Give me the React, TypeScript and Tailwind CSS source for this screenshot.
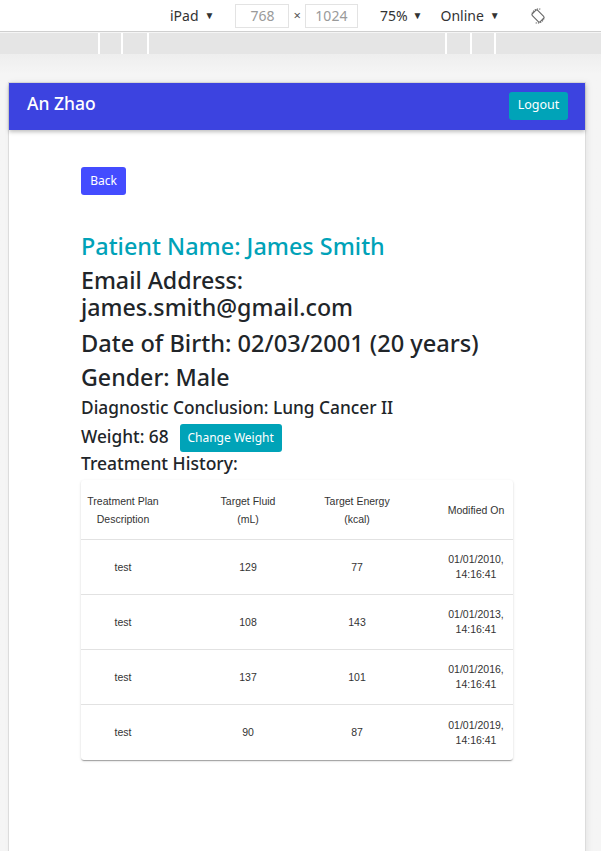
import React from "react";

const rows = [
  { d: "test", f: "129", e: "77", m: "01/01/2010," },
  { d: "test", f: "108", e: "143", m: "01/01/2013," },
  { d: "test", f: "137", e: "101", m: "01/01/2016," },
  { d: "test", f: "90", e: "87", m: "01/01/2019," },
];

function RotateIcon() {
  return (
    <svg width="18" height="18" viewBox="0 0 18 18" fill="none" stroke="#666" strokeWidth="1.1">
      <path d="M3 6.5 A7 7 0 0 1 11.5 2.2" strokeDasharray="1.2 1" />
      <path d="M15 11.5 A7 7 0 0 1 6.5 15.8" strokeDasharray="1.2 1" />
      <rect x="5.2" y="3.4" width="7.6" height="11.2" rx="1.4" transform="rotate(-45 9 9)" />
    </svg>
  );
}

export default function App() {
  const ub = { fontFamily: '"Noto Sans", "Open Sans", sans-serif' };
  return (
    <div className="w-[601px] h-[851px] overflow-hidden bg-[#f5f5f5]" style={{ fontFamily: '"Noto Sans", sans-serif' }}>
      {/* devtools toolbar */}
      <div className="h-[32px] bg-white border-b border-[#cfcfcf] flex items-center text-[14px] text-[#333]">
        <div className="ml-[170px] flex items-center gap-[6px]">
          <span>iPad</span>
          <span className="text-[10px]">▼</span>
        </div>
        <div className="ml-[21px] w-[54px] h-[24px] border border-[#e3e3e3] flex items-center justify-center text-[#9a9a9a]">768</div>
        <span className="mx-[4px] text-[13px] text-[#555]">×</span>
        <div className="w-[53px] h-[24px] border border-[#e3e3e3] flex items-center justify-center text-[#9a9a9a]">1024</div>
        <div className="ml-[22px] flex items-center gap-[5px]">
          <span>75%</span>
          <span className="text-[10px]">▼</span>
        </div>
        <div className="ml-[18px] flex items-center gap-[6px]">
          <span>Online</span>
          <span className="text-[10px]">▼</span>
        </div>
        <div className="ml-[29px] flex items-center">
          <RotateIcon />
        </div>
      </div>
      <div className="mt-[1px] h-[21px] bg-[#e5e5e5] flex">
        <div className="w-[98px]" />
        <div className="w-[2px] bg-white" />
        <div className="w-[21px]" />
        <div className="w-[2px] bg-white" />
        <div className="w-[24px]" />
        <div className="w-[2px] bg-white" />
        <div className="w-[296px]" />
        <div className="w-[2px] bg-white" />
        <div className="w-[23px]" />
        <div className="w-[2px] bg-white" />
        <div className="w-[22px]" />
        <div className="w-[2px] bg-white" />
      </div>
      {/* viewport area */}
      <div className="bg-gradient-to-b from-[#eeeeee] to-[#f5f5f5] to-[20px] pt-[28px] pl-[8px]">
        <div className="w-[578px] h-[800px] bg-white border border-[#dcdcdc] shadow-[2px_0_6px_rgba(0,0,0,0.06)]" style={ub}>
          <div className="h-[47px] bg-[#3c43e0] flex items-center justify-between pl-[18px] pr-[17px] shadow-[0_2px_4px_rgba(0,0,0,0.25)]">
            <span className="text-white text-[17.5px] font-medium -mt-[6px]">An Zhao</span>
            <button className="h-[28px] w-[59px] rounded-[3px] bg-[#00a3b8] text-white text-[12.5px] -mt-[2px]">Logout</button>
          </div>
          <div className="pl-[72px] pt-[37px] w-[504px] text-[#212529]">
            <button className="h-[28px] w-[45px] rounded-[3px] bg-[#444cff] text-white text-[12px]">Back</button>
            <div className="mt-[37px] leading-[28px] text-[23.4px] font-medium text-[#00a2b8]">Patient Name: James Smith</div>
            <div className="mt-[7px] leading-[27px] text-[23.2px] font-medium">Email Address:</div>
            <div className="leading-[27px] text-[23.2px] font-medium">james.smith@gmail.com</div>
            <div className="mt-[9px] leading-[27px] text-[23.6px] font-medium whitespace-nowrap">Date of Birth: 02/03/2001 (20 years)</div>
            <div className="mt-[7px] leading-[27px] text-[23.2px] font-medium">Gender: Male</div>
            <div className="mt-[6px] leading-[22px] text-[17.3px] font-medium">Diagnostic Conclusion: Lung Cancer II</div>
            <div className="mt-[5px] h-[28px] flex items-center">
              <span className="text-[17.3px] font-medium leading-[22px] -mt-[3px]">Weight: 68</span>
              <button className="ml-[11px] h-[28px] w-[102px] rounded-[3px] bg-[#00a3b8] text-white text-[12px]">Change Weight</button>
            </div>
            <div className="leading-[22px] text-[17.5px] font-medium">Treatment History:</div>
            <div
              className="mt-[6px] w-[432px] rounded-[3px] bg-white shadow-[0_2px_1px_-1px_rgba(0,0,0,0.2),0_1px_1px_0_rgba(0,0,0,0.14),0_1px_3px_0_rgba(0,0,0,0.12)] text-[10.5px] text-[#333]"
              style={{ fontFamily: '"Liberation Sans", Arial, sans-serif' }}
            >
              <div className="grid grid-cols-[84px_150px_100px_1fr] h-[60px] items-center border-b border-[#e2e2e2] leading-[18px] text-center">
                <div>Treatment Plan<br />Description</div>
                <div className="pl-[16px]">Target Fluid<br />(mL)</div>
                <div className="pr-[16px]">Target Energy<br />(kcal)</div>
                <div className="pl-[32px] pr-[8px]">Modified On</div>
              </div>
              {rows.map((r, i) => (
                <div
                  key={i}
                  className={`grid grid-cols-[84px_150px_100px_1fr] h-[55px] items-center leading-[15px] text-center ${i < rows.length - 1 ? "border-b border-[#e2e2e2]" : ""}`}
                >
                  <div>{r.d}</div>
                  <div className="pl-[16px]">{r.f}</div>
                  <div className="pr-[16px]">{r.e}</div>
                  <div className="pl-[32px] pr-[8px]">{r.m}<br />14:16:41</div>
                </div>
              ))}
            </div>
          </div>
        </div>
      </div>
    </div>
  );
}
